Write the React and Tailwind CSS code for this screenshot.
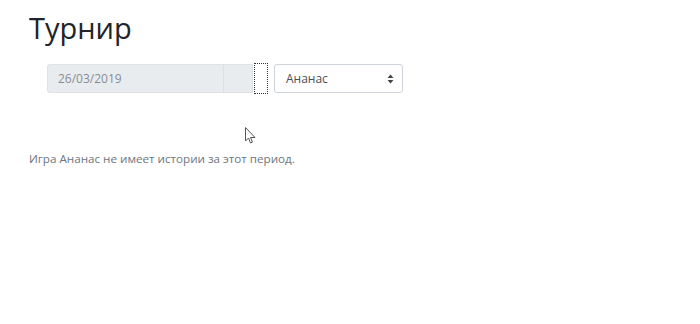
export default function App() {
  return (
    <div className="relative w-[700px] h-[324px] bg-white text-[#212529]" style={{ fontFamily: '"Open Sans", sans-serif' }}>
      <div className="pl-[29px] pt-[9px]">
        <h1 className="text-[29px] leading-[38px] font-normal">Турнир</h1>
        <div className="flex items-center mt-[16px] ml-[18px]">
          <div className="flex h-[29px] w-[206px] bg-[#e9ecef] border border-[#dee2e6] rounded-l-[3px]">
            <div className="w-[175px] flex items-center pl-[10px] text-[12px] text-[#868e96]">26/03/2019</div>
            <div className="flex-1 border-l border-[#dde1e5]"></div>
          </div>
          <div className="ml-[1px] h-[31px] w-[14px] border border-dotted border-[#333]"></div>
          <div className="ml-[6px] h-[29px] w-[129px] border border-[#ced4da] rounded-[3px] flex items-center justify-between pl-[11px] pr-[8px] text-[12px] text-[#495057]">
            <span>Ананас</span>
            <svg width="7" height="10" viewBox="0 0 7 10">
              <path d="M3.5 0.5 L6.5 4 L0.5 4 Z" fill="#444" />
              <path d="M3.5 9.5 L6.5 6 L0.5 6 Z" fill="#444" />
            </svg>
          </div>
        </div>
        <p className="mt-[56px] text-[11.65px] text-[#6c757d]">Игра Ананас не имеет истории за этот период.</p>
      </div>
      <svg className="absolute left-[245px] top-[127px]" width="12" height="19" viewBox="0 0 12 19">
        <path d="M0.5 0.5 L0.5 14 L3.5 11 L5.5 16 L7.5 15 L5.5 10.5 L10 10.5 Z" fill="white" stroke="#555" strokeWidth="1" />
      </svg>
    </div>
  );
}
